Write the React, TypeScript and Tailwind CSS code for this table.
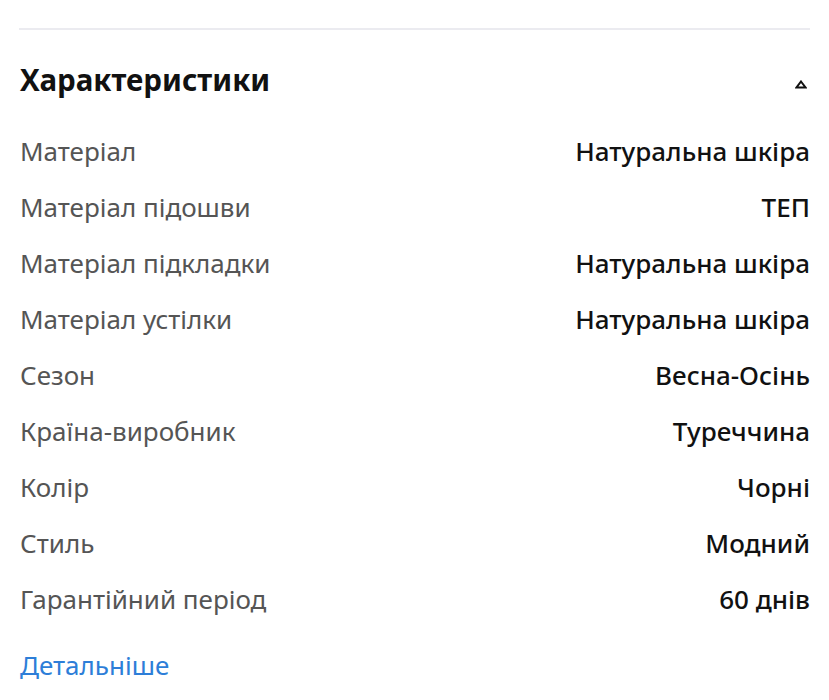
import React from "react";

const rows: [string, string][] = [
  ["Матеріал", "Натуральна шкіра"],
  ["Матеріал підошви", "ТЕП"],
  ["Матеріал підкладки", "Натуральна шкіра"],
  ["Матеріал устілки", "Натуральна шкіра"],
  ["Сезон", "Весна-Осінь"],
  ["Країна-виробник", "Туреччина"],
  ["Колір", "Чорні"],
  ["Стиль", "Модний"],
  ["Гарантійний період", "60 днів"],
];

export default function App() {
  return (
    <div
      className="w-[829px] h-[700px] bg-white overflow-hidden"
      style={{ fontFamily: '"Noto Sans", "Open Sans", sans-serif' }}
    >
      <div className="pt-[28px] px-[19px]">
        <div className="h-[2px] bg-[#ebebf0]" />
        <div className="flex items-center justify-between mt-[32px] pl-px">
          <h2 className="text-[29.5px] leading-[36px] font-bold text-[#111]">
            Характеристики
          </h2>
          <svg width="12" height="9" viewBox="0 0 12 9" className="mr-[3px] mt-[8px]">
            <path d="M6 1.5 L10.5 7.5 L1.5 7.5 Z" fill="none" stroke="#111" strokeWidth="2" strokeLinejoin="miter" />
          </svg>
        </div>
        <div className="mt-[37px] flex flex-col gap-[24px] pl-px">
          {rows.map(([k, v]) => (
            <div key={k} className="flex justify-between items-center h-[32px]">
              <span className="text-[26px] text-[#555] leading-[32px]">{k}</span>
              <span className="text-[26px] text-[#111] font-medium leading-[32px]">{v}</span>
            </div>
          ))}
        </div>
        <div className="mt-[34px] pl-px">
          <a className="text-[26px] text-[#2d7ed8] leading-[32px]">Детальніше</a>
        </div>
      </div>
    </div>
  );
}
